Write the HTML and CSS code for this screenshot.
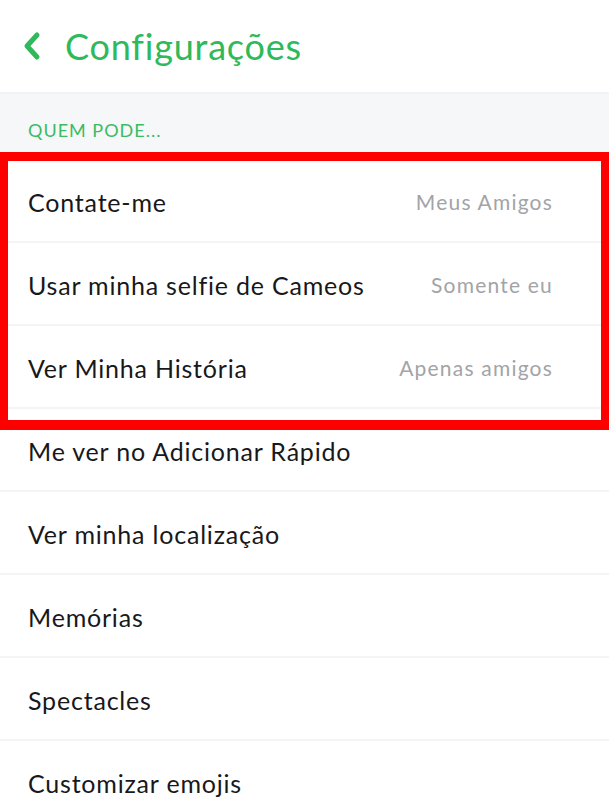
FILE: index.html
```html
<!DOCTYPE html>
<html lang="pt-BR">
<head>
<meta charset="utf-8">
<title>Configurações</title>
<link rel="stylesheet" href="styles.css">
</head>
<body>
<div class="screen">
  <header class="topbar">
    <svg class="back" width="20" height="30" viewBox="0 0 20 30" aria-hidden="true">
      <path d="M15 4 L5 15 L15 26" fill="none" stroke="#2fb95a" stroke-width="5" stroke-linecap="round" stroke-linejoin="round"/>
    </svg>
    <h1 class="title">Configurações</h1>
  </header>
  <div class="section-label">QUEM PODE...</div>
  <ul class="list">
    <li class="row"><span class="label">Contate-me</span><span class="value">Meus Amigos</span></li>
    <li class="row"><span class="label">Usar minha selfie de Cameos</span><span class="value">Somente eu</span></li>
    <li class="row"><span class="label">Ver Minha História</span><span class="value">Apenas amigos</span></li>
    <li class="row"><span class="label">Me ver no Adicionar Rápido</span></li>
    <li class="row"><span class="label">Ver minha localização</span></li>
    <li class="row"><span class="label">Memórias</span></li>
    <li class="row"><span class="label">Spectacles</span></li>
    <li class="row"><span class="label">Customizar emojis</span></li>
  </ul>
  <div class="highlight"></div>
</div>
</body>
</html>
```

FILE: styles.css
```css
html, body {
  margin: 0;
  padding: 0;
  background: #ffffff;
}
body {
  font-family: Lato, "Noto Sans", sans-serif;
  width: 609px;
  height: 812px;
  overflow: hidden;
}
.screen {
  position: relative;
  width: 609px;
  height: 812px;
  overflow: hidden;
}
.topbar {
  height: 94px;
  display: flex;
  align-items: center;
  padding: 0 0 0 22px;
  box-sizing: border-box;
  border-bottom: 2px solid #f1f2f4;
}
.back {
  display: block;
  margin-top: 0;
}
.title {
  margin: 0 0 0 23px;
  font-weight: 400;
  font-size: 36px;
  color: #2fb95a;
  letter-spacing: 0.8px;
}
.section-label {
  height: 66px;
  background: #f6f7f9;
  box-sizing: border-box;
  padding: 25px 0 0 28px;
  font-size: 18px;
  color: #3cbb62;
  letter-spacing: 1px;
}
.list {
  list-style: none;
  margin: 0;
  padding: 0;
}
.row {
  height: 83px;
  box-sizing: border-box;
  border-bottom: 2px solid #f4f4f5;
  display: flex;
  align-items: center;
  justify-content: space-between;
  padding: 2px 56px 0 28px;
}
.label {
  font-size: 25px;
  color: #18181a;
  letter-spacing: 0.8px;
}
.value {
  font-size: 21px;
  color: #a2a4a7;
  letter-spacing: 1.2px;
}
.highlight {
  position: absolute;
  left: 0;
  top: 152px;
  width: 609px;
  height: 278px;
  box-sizing: border-box;
  border-style: solid;
  border-color: #fd0000;
  border-width: 9px 8px 10px 8px;
  pointer-events: none;
}
```
